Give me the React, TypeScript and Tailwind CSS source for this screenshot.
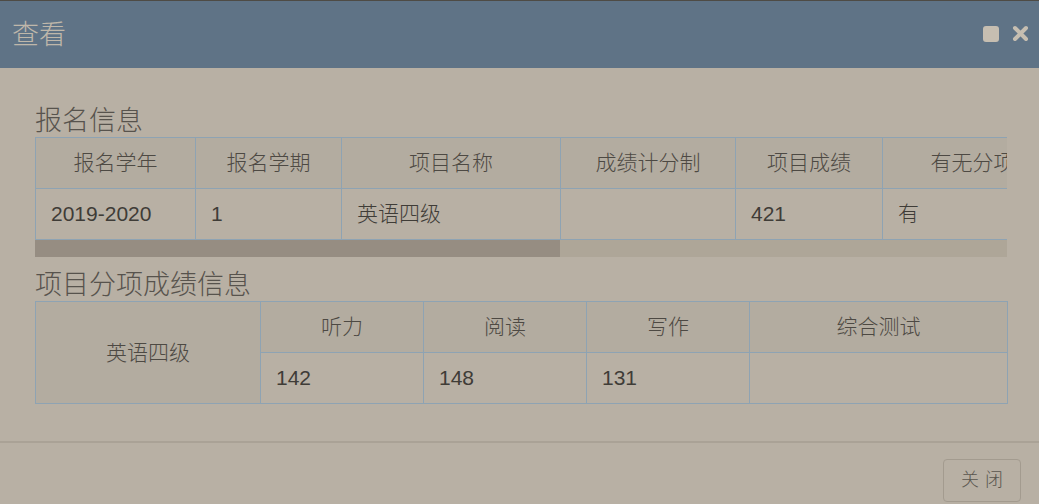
import React from "react";

const font = { fontFamily: '"Liberation Sans", "Noto Sans CJK SC", sans-serif' };

export default function App() {
  const th = "h-[51px] border border-[#8ea3b3] bg-[#b3aca0] text-center font-light text-[21px] text-[#4d4943] whitespace-nowrap p-0";
  const td = "h-[51px] border border-[#8ea3b3] text-left font-light text-[21px] text-[#3f3c37] whitespace-nowrap pl-[15px] p-0";
  return (
    <div style={font} className="w-[1039px] h-[504px] bg-[#b8b0a4] overflow-hidden flex flex-col">
      <div className="h-[1px] bg-[#4e4b45]" />
      <div className="h-[67px] bg-[#5f7386] flex items-center justify-between pl-[12px] pr-[10px]">
        <span className="text-[27px] text-[#bfb7aa] leading-none mt-[1px] font-light">查看</span>
        <div className="flex items-center gap-[13px] mt-[-2px]">
          <div className="w-[16px] h-[16px] rounded-[3px] bg-[#c6beb1]" />
          <svg width="17" height="17" viewBox="0 0 17 17">
            <path d="M3 3 L14 14 M14 3 L3 14" stroke="#c6beb1" strokeWidth="4" strokeLinecap="round" />
          </svg>
        </div>
      </div>
      <div className="px-[35px] pt-[37px] flex flex-col">
        <div className="text-[27px] leading-[32px] text-[#57534d] h-[32px] font-light">报名信息</div>
        <div className="w-[972px] overflow-hidden">
          <table className="border-collapse table-fixed w-[1800px]">
            <colgroup>
              <col className="w-[160px]" />
              <col className="w-[146px]" />
              <col className="w-[219px]" />
              <col className="w-[175px]" />
              <col className="w-[147px]" />
              <col className="w-[180px]" />
              <col className="w-[200px]" />
              <col className="w-[180px]" />
              <col className="w-[393px]" />
            </colgroup>
            <thead>
              <tr>
                <th className={th}>报名学年</th>
                <th className={th}>报名学期</th>
                <th className={th}>项目名称</th>
                <th className={th}>成绩计分制</th>
                <th className={th}>项目成绩</th>
                <th className={th}>有无分项</th>
                <th className={th}></th>
                <th className={th}></th>
                <th className={th}></th>
              </tr>
            </thead>
            <tbody>
              <tr>
                <td className={td}>2019-2020</td>
                <td className={td}>1</td>
                <td className={td}>英语四级</td>
                <td className={td}></td>
                <td className={td}>421</td>
                <td className={td}>有</td>
                <td className={td}></td>
                <td className={td}></td>
                <td className={td}></td>
              </tr>
            </tbody>
          </table>
          <div className="h-[17px] bg-[#aea698] flex">
            <div className="w-[525px] h-full bg-[#968d82]" />
          </div>
        </div>
        <div className="mt-[12px] text-[27px] leading-[32px] text-[#57534d] h-[32px] font-light">项目分项成绩信息</div>
        <table className="border-collapse table-fixed w-[972px]">
          <colgroup>
            <col className="w-[225px]" />
            <col className="w-[163px]" />
            <col className="w-[163px]" />
            <col className="w-[163px]" />
            <col className="w-[258px]" />
          </colgroup>
          <tbody>
            <tr>
              <th rowSpan={2} className={th + " h-[102px]"}>英语四级</th>
              <th className={th}>听力</th>
              <th className={th}>阅读</th>
              <th className={th}>写作</th>
              <th className={th}>综合测试</th>
            </tr>
            <tr>
              <td className={td}>142</td>
              <td className={td}>148</td>
              <td className={td}>131</td>
              <td className={td}></td>
            </tr>
          </tbody>
        </table>
      </div>
      <div className="mt-[37px] h-[2px] bg-[#aaa296]" />
      <div className="flex justify-end pr-[18px] pt-[16px]">
        <button className="w-[78px] h-[43px] border-[1.5px] border-[#a39b8f] rounded-[4px] text-[18px] text-[#5a564f] bg-[#b8b0a4] tracking-[6px] pl-[6px] font-light">
          关闭
        </button>
      </div>
    </div>
  );
}
